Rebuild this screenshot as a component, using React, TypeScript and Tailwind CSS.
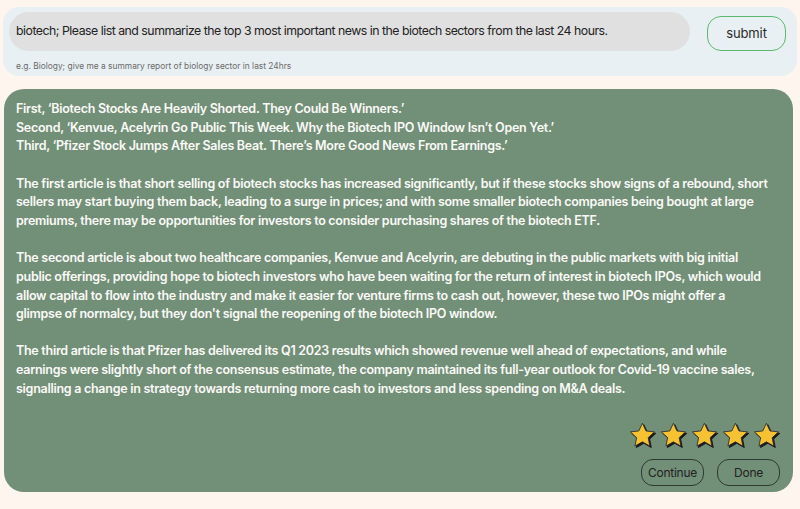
import React from "react";

const titles = [
  "First, ‘Biotech Stocks Are Heavily Shorted. They Could Be Winners.’",
  "Second, ‘Kenvue, Acelyrin Go Public This Week. Why the Biotech IPO Window Isn’t Open Yet.’",
  "Third, ‘Pfizer Stock Jumps After Sales Beat. There’s More Good News From Earnings.’",
];

const paragraphs = [
  "The first article is that short selling of biotech stocks has increased significantly, but if these stocks show signs of a rebound, short sellers may start buying them back, leading to a surge in prices; and with some smaller biotech companies being bought at large premiums, there may be opportunities for investors to consider purchasing shares of the biotech ETF.",
  "The second article is about two healthcare companies, Kenvue and Acelyrin, are debuting in the public markets with big initial public offerings, providing hope to biotech investors who have been waiting for the return of interest in biotech IPOs, which would allow capital to flow into the industry and make it easier for venture firms to cash out, however, these two IPOs might offer a glimpse of normalcy, but they don't signal the reopening of the biotech IPO window.",
  "The third article is that Pfizer has delivered its Q1 2023 results which showed revenue well ahead of expectations, and while earnings were slightly short of the consensus estimate, the company maintained its full-year outlook for Covid-19 vaccine sales, signalling a change in strategy towards returning more cash to investors and less spending on M&A deals.",
];

function Star() {
  const pts =
    "12,1.8 15,8.2 22,9 16.8,13.8 18.2,20.8 12,17.3 5.8,20.8 7.2,13.8 2,9 9,8.2";
  return (
    <svg width="30" height="29" viewBox="0 0 25 24">
      <polygon points={pts} transform="translate(1.2 1.2)" fill="#1a1a1a" strokeLinejoin="round" stroke="#1a1a1a" strokeWidth="0.8" />
      <polygon points={pts} fill="#f6c232" stroke="#2a2a2a" strokeWidth="0.7" strokeLinejoin="round" />
    </svg>
  );
}

export default function App() {
  return (
    <div className="min-h-screen bg-[#fdf5ee] pt-[7px] px-[3px] font-['Inter',sans-serif]">
      <div className="flex items-start rounded-2xl bg-[#e8f0f3] pl-[6px] pr-[11px] pt-[5px] pb-[4px]">
        <div className="flex-1">
          <div className="flex h-[39px] items-center rounded-full bg-[#e0e0e0] pl-[7px] text-[12.3px] tracking-[-0.04em] text-[#222]">
            biotech; Please list and summarize the top 3 most important news in the biotech sectors from the last 24 hours.
          </div>
          <div className="mt-[9px] pl-[7px] text-[8.4px] leading-[12px] text-[#6b6b6b]">
            e.g. Biology; give me a summary report of biology sector in last 24hrs
          </div>
        </div>
        <button className="ml-[17px] mt-1 h-[35px] w-[79px] rounded-[14px] border border-[#5cb870] text-[13px] tracking-[-0.01em] text-[#2a2a2a]">
          submit
        </button>
      </div>

      <div className="mt-[13px] ml-px mr-[4px] flex h-[403px] flex-col rounded-[20px] bg-[#728f78] pl-3 pr-3 pt-[11px] pb-[6px]">
        <div className="pr-[8px] text-[12.5px] font-semibold leading-[18.65px] tracking-[-0.022em] text-[#fafaf6]">
          {titles.map((t) => (
            <div key={t}>{t}</div>
          ))}
          {paragraphs.map((p) => (
            <p key={p.slice(0, 20)} className="mt-[18.65px]">
              {p}
            </p>
          ))}
        </div>
        <div className="mt-auto flex flex-col items-end">
          <div className="mr-[-1px] flex gap-[1px]">
            <Star />
            <Star />
            <Star />
            <Star />
            <Star />
          </div>
          <div className="mt-[9px] flex gap-[13px] pr-px">
            <button className="h-[27px] w-[63px] rounded-xl border border-[#2e3a30] text-[12px] tracking-[-0.02em] text-[#222]">
              Continue
            </button>
            <button className="h-[27px] w-[63px] rounded-xl border border-[#2e3a30] text-[12px] tracking-[-0.02em] text-[#222]">
              Done
            </button>
          </div>
        </div>
      </div>
    </div>
  );
}
